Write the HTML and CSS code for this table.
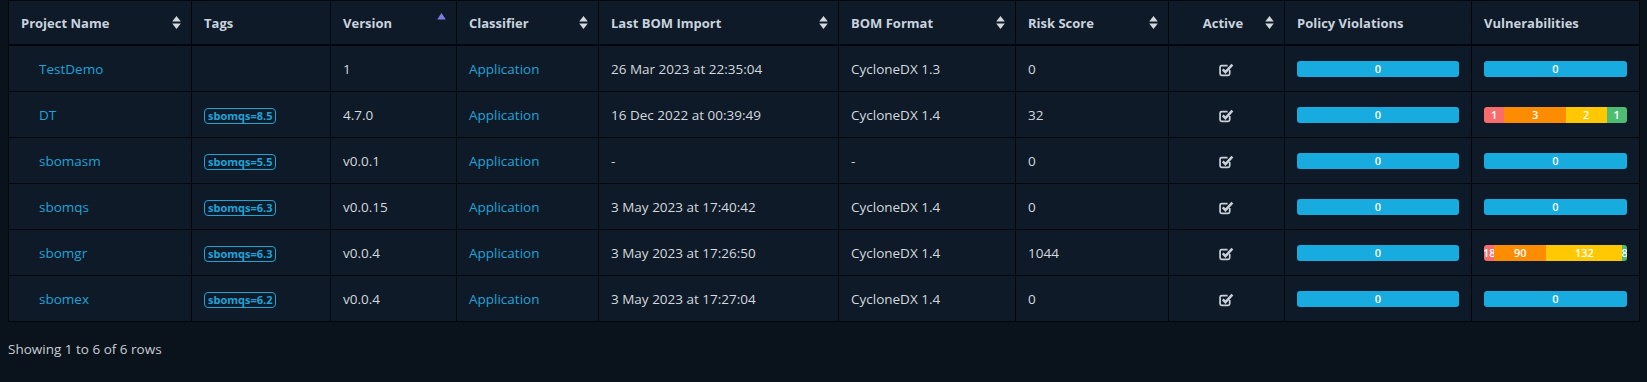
FILE: index.html
```html
<!DOCTYPE html>
<html>
<head>
<meta charset="utf-8">
<link rel="stylesheet" href="styles.css">
</head>
<body>
<table class="grid">
  <colgroup>
    <col style="width:183px"><col style="width:139px"><col style="width:126px"><col style="width:142px"><col style="width:240px"><col style="width:177px"><col style="width:153px"><col style="width:116px"><col style="width:187px"><col style="width:168px">
  </colgroup>
  <thead>
    <tr>
      <th><div class="th-in"><span>Project Name</span><svg class="sort" viewBox="0 0 8 14"><path d="M0 6 L4 1 L8 6 Z"/><path d="M0 8 L8 8 L4 13 Z"/></svg></div></th>
      <th><div class="th-in"><span>Tags</span></div></th>
      <th><div class="th-in"><span>Version</span><svg class="sort asc" viewBox="0 0 8 14"><path d="M0 7 L4 1 L8 7 Z"/></svg></div></th>
      <th><div class="th-in"><span>Classifier</span><svg class="sort" viewBox="0 0 8 14"><path d="M0 6 L4 1 L8 6 Z"/><path d="M0 8 L8 8 L4 13 Z"/></svg></div></th>
      <th><div class="th-in"><span>Last BOM Import</span><svg class="sort" viewBox="0 0 8 14"><path d="M0 6 L4 1 L8 6 Z"/><path d="M0 8 L8 8 L4 13 Z"/></svg></div></th>
      <th><div class="th-in"><span>BOM Format</span><svg class="sort" viewBox="0 0 8 14"><path d="M0 6 L4 1 L8 6 Z"/><path d="M0 8 L8 8 L4 13 Z"/></svg></div></th>
      <th><div class="th-in"><span>Risk Score</span><svg class="sort" viewBox="0 0 8 14"><path d="M0 6 L4 1 L8 6 Z"/><path d="M0 8 L8 8 L4 13 Z"/></svg></div></th>
      <th><div class="th-in center"><span>Active</span><svg class="sort" viewBox="0 0 8 14"><path d="M0 6 L4 1 L8 6 Z"/><path d="M0 8 L8 8 L4 13 Z"/></svg></div></th>
      <th><div class="th-in"><span>Policy Violations</span></div></th>
      <th><div class="th-in"><span>Vulnerabilities</span></div></th>
    </tr>
  </thead>
  <tbody>
    <tr>
      <td class="name"><a>TestDemo</a></td>
      <td></td>
      <td>1</td>
      <td><a>Application</a></td>
      <td>26 Mar 2023 at 22:35:04</td>
      <td>CycloneDX 1.3</td>
      <td>0</td>
      <td class="c"><svg class="chk" viewBox="0 0 14 13"><path class="box" d="M10 6.5 V10 Q10 11.5 8.5 11.5 H2.5 Q1 11.5 1 10 V4 Q1 2.5 2.5 2.5 H8"/><path class="tick" d="M3.5 6 L6 8.5 L12.5 1.5"/></svg></td>
      <td><div class="bar"><span class="seg info" style="width:100%">0</span></div></td>
      <td><div class="bar"><span class="seg info" style="width:100%">0</span></div></td>
    </tr>
    <tr>
      <td class="name"><a>DT</a></td>
      <td><span class="tag">sbomqs=8.5</span></td>
      <td>4.7.0</td>
      <td><a>Application</a></td>
      <td>16 Dec 2022 at 00:39:49</td>
      <td>CycloneDX 1.4</td>
      <td>32</td>
      <td class="c"><svg class="chk" viewBox="0 0 14 13"><path class="box" d="M10 6.5 V10 Q10 11.5 8.5 11.5 H2.5 Q1 11.5 1 10 V4 Q1 2.5 2.5 2.5 H8"/><path class="tick" d="M3.5 6 L6 8.5 L12.5 1.5"/></svg></td>
      <td><div class="bar"><span class="seg info" style="width:100%">0</span></div></td>
      <td><div class="bar"><span class="seg crit" style="width:14.2857%">1</span><span class="seg high" style="width:42.8571%">3</span><span class="seg med" style="width:28.5714%">2</span><span class="seg low" style="width:14.2857%">1</span></div></td>
    </tr>
    <tr>
      <td class="name"><a>sbomasm</a></td>
      <td><span class="tag">sbomqs=5.5</span></td>
      <td>v0.0.1</td>
      <td><a>Application</a></td>
      <td>-</td>
      <td>-</td>
      <td>0</td>
      <td class="c"><svg class="chk" viewBox="0 0 14 13"><path class="box" d="M10 6.5 V10 Q10 11.5 8.5 11.5 H2.5 Q1 11.5 1 10 V4 Q1 2.5 2.5 2.5 H8"/><path class="tick" d="M3.5 6 L6 8.5 L12.5 1.5"/></svg></td>
      <td><div class="bar"><span class="seg info" style="width:100%">0</span></div></td>
      <td><div class="bar"><span class="seg info" style="width:100%">0</span></div></td>
    </tr>
    <tr>
      <td class="name"><a>sbomqs</a></td>
      <td><span class="tag">sbomqs=6.3</span></td>
      <td>v0.0.15</td>
      <td><a>Application</a></td>
      <td>3 May 2023 at 17:40:42</td>
      <td>CycloneDX 1.4</td>
      <td>0</td>
      <td class="c"><svg class="chk" viewBox="0 0 14 13"><path class="box" d="M10 6.5 V10 Q10 11.5 8.5 11.5 H2.5 Q1 11.5 1 10 V4 Q1 2.5 2.5 2.5 H8"/><path class="tick" d="M3.5 6 L6 8.5 L12.5 1.5"/></svg></td>
      <td><div class="bar"><span class="seg info" style="width:100%">0</span></div></td>
      <td><div class="bar"><span class="seg info" style="width:100%">0</span></div></td>
    </tr>
    <tr>
      <td class="name"><a>sbomgr</a></td>
      <td><span class="tag">sbomqs=6.3</span></td>
      <td>v0.0.4</td>
      <td><a>Application</a></td>
      <td>3 May 2023 at 17:26:50</td>
      <td>CycloneDX 1.4</td>
      <td>1044</td>
      <td class="c"><svg class="chk" viewBox="0 0 14 13"><path class="box" d="M10 6.5 V10 Q10 11.5 8.5 11.5 H2.5 Q1 11.5 1 10 V4 Q1 2.5 2.5 2.5 H8"/><path class="tick" d="M3.5 6 L6 8.5 L12.5 1.5"/></svg></td>
      <td><div class="bar"><span class="seg info" style="width:100%">0</span></div></td>
      <td><div class="bar"><span class="seg crit" style="width:7.258%">18</span><span class="seg high" style="width:36.29%">90</span><span class="seg med" style="width:53.226%">132</span><span class="seg low" style="width:3.226%">8</span></div></td>
    </tr>
    <tr>
      <td class="name"><a>sbomex</a></td>
      <td><span class="tag">sbomqs=6.2</span></td>
      <td>v0.0.4</td>
      <td><a>Application</a></td>
      <td>3 May 2023 at 17:27:04</td>
      <td>CycloneDX 1.4</td>
      <td>0</td>
      <td class="c"><svg class="chk" viewBox="0 0 14 13"><path class="box" d="M10 6.5 V10 Q10 11.5 8.5 11.5 H2.5 Q1 11.5 1 10 V4 Q1 2.5 2.5 2.5 H8"/><path class="tick" d="M3.5 6 L6 8.5 L12.5 1.5"/></svg></td>
      <td><div class="bar"><span class="seg info" style="width:100%">0</span></div></td>
      <td><div class="bar"><span class="seg info" style="width:100%">0</span></div></td>
    </tr>
  </tbody>
</table>
<div class="footer">Showing 1 to 6 of 6 rows</div>
</body>
</html>
```

FILE: styles.css
```css
html, body {
  margin: 0;
  padding: 0;
  background: #0a121b;
}
body {
  padding: 0 8px;
  font-family: "Open Sans", "Noto Sans", sans-serif;
  font-size: 13.5px;
  color: #d3d9df;
}
.grid {
  width: 1631px;
  border-collapse: collapse;
  table-layout: fixed;
  background: #0e1a27;
  border: 1px solid #03070b;
}
.grid th, .grid td {
  border: 1px solid #03070b;
  padding: 0 12px;
  text-align: left;
  white-space: nowrap;
}
.grid th {
  height: 43px;
  border-bottom: 2px solid #03070b;
  color: #c9d3df;
  font-weight: 700;
  font-size: 13px;
}
.th-in {
  display: flex;
  align-items: center;
  justify-content: space-between;
}
.th-in.center span {
  margin: 0 auto;
}
.sort {
  width: 9px;
  height: 15px;
  fill: #d2d8de;
  flex: none;
  margin-right: -2px;
}
.sort.asc {
  fill: #7c7ce2;
  margin-top: -6px;
}
.grid td {
  height: 45px;
}
.grid td.name {
  padding-left: 30px;
}
.grid td.c {
  text-align: center;
}
a {
  color: #1ea3d9;
  text-decoration: none;
}
.tag {
  display: inline-block;
  border: 1px solid #1ea3d9;
  border-radius: 4px;
  color: #1ea3d9;
  font-size: 11px;
  font-weight: 700;
  line-height: 14px;
  padding: 0 3px;
}
.chk {
  width: 15px;
  height: 14px;
  vertical-align: middle;
  fill: none;
  stroke: #c9d0d8;
}
.chk .box {
  stroke-width: 1.6;
}
.chk .tick {
  stroke-width: 2.4;
}
.bar {
  display: flex;
  height: 16px;
  border-radius: 3px;
  overflow: hidden;
}
.seg {
  display: flex;
  justify-content: center;
  align-items: center;
  overflow: hidden;
  color: #fff;
  font-size: 11px;
  font-weight: 600;
  white-space: nowrap;
}
.seg.info { background: #18abe0; }
.seg.crit { background: #f86c6b; }
.seg.high { background: #fd8c00; }
.seg.med { background: #ffc800; }
.seg.low { background: #4dbd74; }
.footer {
  margin-top: 17px;
  font-size: 13.5px;
  color: #c8ced4;
  line-height: 20px;
}
```
